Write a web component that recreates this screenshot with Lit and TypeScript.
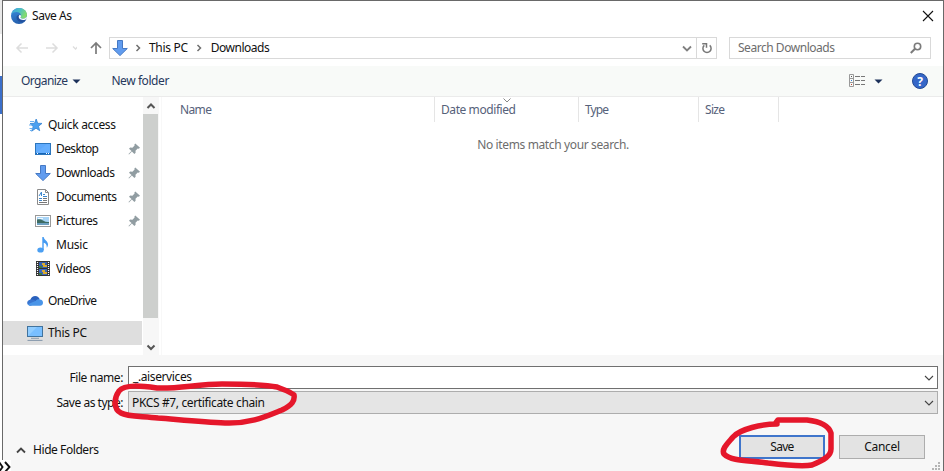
import { LitElement, html, css, svg } from "lit";
import { customElement, property } from "lit/decorators.js";

/** A text label whose tracking is adjusted so that it fills a given width. */
@customElement("ui-label")
class UiLabel extends LitElement {
  @property() text = "";
  @property({ type: Number }) size = 0;

  static styles = css`
    :host { display: block; flex: none; white-space: pre; }
    .run { display: inline-block; }
  `;

  firstUpdated() {
    const run = this.renderRoot.querySelector(".run") as HTMLElement;
    const natural = run.getBoundingClientRect().width;
    if (this.size && this.text.length > 1) {
      run.style.letterSpacing = (this.size - natural) / (this.text.length - 1) + "px";
    }
  }

  render() {
    return html`<span class="run">${this.text}</span>`;
  }
}

const label = (text: string, size: number) => html`<ui-label text=${text} size=${size}></ui-label>`;

const down = svg`<path d="M5.5 .5h5v8h4.8L8 15.6 .7 8.500h4.800z" fill="#619cef" stroke="#4579c4"/>`;

const icons: Record<string, unknown> = {
  star: svg`<path d="M9.200 2l1.500 4.300 4.300.1-3.500 2.800 1.200 4.500-3.700-2.500-4.300 3 1.500-4.700L3 6.500l4.500-.2z" fill="#4ba0f0" stroke="#3584d3" stroke-width=".8"/><path d="M3 4.500h4M2 8h3M2.500 11.500h3M3 13.500h2" stroke="#6eb1f0"/>`,
  desktop: svg`<rect x=".5" y="2.500" width="15" height="11" fill="#5faafc" stroke="#2c76bd"/><path d="M1 11.500L12 3h3v9H1z" fill="#6db4ff" opacity=".5"/><path d="M1 12.500h14" stroke="#1565b5"/><path d="M2 12.500h1M11 12.500h1M13 12.500h1" stroke="#fff"/>`,
  down,
  doc: svg`<path d="M2.500.5h8l3 3v12h-11z" fill="#fff" stroke="#8a8a8a"/><path d="M10.500.5v3h3" fill="none" stroke="#8a8a8a"/><path d="M4 7l2.500-4v4M8 5.500h2M8 7.500h4M4 9.500h3M4 11.500h3" stroke="#3c87ce" fill="none"/><path d="M8 9.500h4M8 11.500h4M4 13.500h8" stroke="#777"/>`,
  pic: svg`<rect x=".5" y="2.500" width="15" height="11" fill="#fff" stroke="#999"/><rect x="2" y="4" width="12" height="8" fill="#a8d4f6"/><path d="M2 6.500q3-1 6 1t6 1.500v1H2z" fill="#3d6b63"/><path d="M2 10h12v2H2z" fill="#6c9fc0"/><path d="M3 5.500h5" stroke="#eef8ff"/>`,
  music: svg`<ellipse cx="5.500" cy="13" rx="3.200" ry="2.600" fill="#4b9ff2"/><path d="M7.300 0h1.400c.3 3 4.300 4 4.300 7.300 0 1.400-.4 2.400-1.200 3.400.2-3-1.200-4.500-3.100-5V13H7.300z" fill="#459bf2"/>`,
  video: svg`<rect x="1" y="0" width="14" height="15" fill="#333"/><rect x="4" y="1" width="8" height="6" fill="#355fae"/><rect x="4" y="8" width="8" height="6" fill="#3b68bd"/><path d="M7 2h3v2h2v2H8V4H7zM7 9h3v2h2v2H8v-2H7z" fill="#d9aa30"/><path d="M4 5h3v2H4zM4 12h3v2H4z" fill="#3b7b42"/><path d="M2.500 1v14M13.500 1v14" stroke="#fff" stroke-width="1.200" stroke-dasharray="1 1"/>`,
  cloud: svg`<path d="M3.300 7C4 4.300 6 3 8.200 3c2.300 0 3.900 1.400 4.500 3.300L9 10H3z" fill="#2a61bd"/><path d="M3.800 6.500c2-.5 4 .6 5.700 2L4 12.800C-.8 13-1.300 7 3.800 6.500z" fill="#3975d0"/><path d="M8.500 8c1-1.500 2.700-2 4.200-1.500C15 6.700 16 8 16 9.800c0 2-1.300 3-3 3H3.600c-1.300 0-2.300-.6-2.900-1.500z" fill="#4a95e8"/>`,
  pc: svg`<rect x=".5" y="1.500" width="15" height="10" fill="#79bfff" stroke="#41739d"/><path d="M1 11V2h9z" fill="#91cdff"/><path d="M4 13.300h8" stroke="#8b9cac"/><path d="M.5 15.400h15" stroke="#8396ab"/>`,
  pin: svg`<path d="M9.300 2.500l4.700 4.200-1.300 1-1-.1L9.500 9.800l.1 2-1.200 1.100-2.500-2.400L3 13.500 2.500 13l3-3L3 7.700l1.200-1.100 2.200.1L8.600 4.500l-.2-1z" fill="#919da2"/>`,
  edge: svg`
    <defs>
      <linearGradient id="t" x1="0" y1="0" x2="1" y2=".4"><stop offset="0" stop-color="#3d9fe0"/><stop offset=".55" stop-color="#4cc0c4"/><stop offset="1" stop-color="#86dc6c"/></linearGradient>
      <linearGradient id="b" x1="0" y1="0" x2=".3" y2="1"><stop offset="0" stop-color="#3c8fe0"/><stop offset="1" stop-color="#2560ae"/></linearGradient>
    </defs>
    <circle cx="8" cy="8" r="8" fill="url(#b)"/>
    <path d="M.4 6C1.400 2.500 4.400 0 8 0c4.600 0 8 3.300 8 6.800 0 2.500-1.800 4-4.200 4-1.400 0-2.300-.6-2.300-1.200 0-.5.6-.8.6-1.900C10.100 5.700 8 4 5.400 4 3.500 4 1.500 4.800.4 6z" fill="url(#t)"/>
    <path d="M6 7.700c-1.500 3 1.200 6.500 5 6.200 1.800-.1 3.200-.9 4.200-2.300-1.600.8-4.300 1-5.900-.2C7.900 10.500 7.600 9 8.300 7.500 7.500 7 6.500 7 6 7.700z" fill="#24509c"/>
    <path d="M8.300 7.200c-1.200 1-.6 3.500 1.500 4.300 2 .8 4.400.5 6-.8l-.4 1.300L16 8.300c-1.200 1.800-2.700 2.600-4.200 2.500-1.400 0-2.300-.6-2.300-1.200 0-.5.6-.8.600-1.500-.2-.9-1-1.300-1.800-.9z" fill="#fff"/>`,
};

const icon = (name: string) => html`<svg class="ico" viewBox="0 0 16 16" width="16" height="16">${icons[name]}</svg>`;

const chevron = (d: string, color: string, w = 1.2) =>
  html`<svg class="ico" width="12" height="12" viewBox="0 0 12 12"><path d=${d} fill="none" stroke=${color} stroke-width=${w} /></svg>`;

const DOWN = "M2 4l4 4 4-4";
const RIGHT = "M4.500 3l3 3-3 3";

interface Place { name: string; width: number; icon: string; level?: number; pinned?: boolean; gap?: boolean; selected?: boolean }

const places: Place[] = [
  { name: "Quick access", width: 68, icon: "star" },
  { name: "Desktop", width: 43, icon: "desktop", level: 1, pinned: true },
  { name: "Downloads", width: 59, icon: "down", level: 1, pinned: true },
  { name: "Documents", width: 61, icon: "doc", level: 1, pinned: true },
  { name: "Pictures", width: 42, icon: "pic", level: 1, pinned: true },
  { name: "Music", width: 32, icon: "music", level: 1 },
  { name: "Videos", width: 35, icon: "video", level: 1 },
  { name: "OneDrive", width: 49, icon: "cloud", gap: true },
  { name: "This PC", width: 39, icon: "pc", gap: true, selected: true },
];

@customElement("app-root")
class AppRoot extends LitElement {
  static styles = css`
    :host {
      display: grid; grid-template-columns: 2px 942px; position: relative;
      width: 944px; height: 471px; overflow: hidden; box-sizing: border-box;
      font: 12px/16px "Noto Sans", "Open Sans", sans-serif; color: #111; background: #fff;
    }
    * { box-sizing: border-box; }
    svg { display: block; flex: none; }
    .behind { display: grid; grid-template-rows: 34px 42px 38px 1fr; }
    .behind .tab { background: #e9e9e9; }
    .behind .blue { background: #3b6fca; }
    .window {
      border: 1px solid #696969; border-bottom: 0; height: 471px;
      display: grid; grid-template-columns: 940px; grid-template-rows: 29px 36px 31px 258px 116px;
    }
    .title { display: flex; align-items: center; padding: 0 8px; gap: 5px; }
    .grow { flex: 1; }
    .title .close { margin-right: 1px; }
    .nav { display: flex; align-items: center; padding: 0 12px; }
    .nav > svg { margin-right: 10px; }
    .nav > .up { margin-right: 4px; }
    .address { display: flex; align-items: center; width: 608px; height: 22px; border: 1px solid #d9d9d9; }
    .crumbs { display: flex; align-items: center; padding-left: 2px; flex: 1; }
    .crumbs svg:nth-of-type(2) { margin: 0 5px 0 4px; }
    .crumbs ui-label + svg { margin: 0 6px 0 5px; }
    .reload { width: 20px; height: 20px; border-left: 1px solid #d9d9d9; display: grid; place-items: center; margin-left: 3px; }
    .search { display: flex; align-items: center; justify-content: space-between; width: 202px; height: 22px; border: 1px solid #d9d9d9; margin-left: 12px; padding: 0 7px 0 8px; color: #6d6d6d; }
    .tools { background: #f8faf8; border-bottom: 1px solid #ebebeb; display: flex; align-items: center; padding: 0 15px 0 18px; color: #27385c; }
    .tools .caret { margin: 0 30px 0 5px; }
    .tools .views { margin-right: 8px; }
    .tools .caret2 { margin-right: 29px; }
    .main { display: grid; grid-template-columns: 139px 17px 2px 1fr; }
    .places { padding-top: 16px; }
    .place { display: flex; align-items: center; height: 24px; padding-left: 24px; gap: 5px; }
    .place.child { padding-left: 32px; }
    .place.gap { margin-top: 8px; }
    .place.selected { background: #dedede; }
    .place .pin { margin-left: auto; }
    .scroll { background: #f7f7f7; display: grid; grid-template-rows: 17px 204px 37px; justify-items: center; margin-left: 1px; }
    .scroll .thumb { background: #cdcfcd; width: 15px; justify-self: start; }
    .scroll svg { margin-top: 3px; }
    .scroll .thumb + svg { margin-top: 23px; }
    .list { border-left: 1px solid #f8f8f8; }
    .heads { display: grid; grid-template-columns: 273px 144px 120px 80px; height: 25px; color: #56617a; }
    .head { border-right: 1px solid #e5e5e5; padding: 5px 0 0 6px; position: relative; }
    .head:first-child { padding-left: 18px; }
    .sort { position: absolute; left: 66px; top: -3px; }
    .empty { display: flex; justify-content: center; padding: 15px 0 0 1px; color: #6d6d6d; }
    .foot { background: #f7f7f7; display: grid; grid-template-rows: 25px 23px 1fr; padding: 11px 5px 0 0; }
    .field { display: grid; grid-template-columns: 120px 810px; column-gap: 5px; }
    .field > ui-label { justify-self: end; padding-top: 4px; }
    .box { height: 23px; border: 1px solid #707070; background: #fff; display: flex; align-items: center; justify-content: space-between; padding: 0 2px 0 4px; }
    .box .value { padding-bottom: 2px; }
    .box.type { background: #e5e5e5; border-color: #adadad; padding-left: 3px; }
    .box.type .value { padding-bottom: 0; }
    .actions { display: flex; align-items: flex-start; padding: 21px 13px 0 12px; }
    .hide { display: flex; align-items: center; gap: 6px; padding-top: 7px; }
    .btn { width: 86px; height: 24px; background: #e3e3e3; border: 1px solid #adadad; display: grid; place-items: center; margin-left: 14px; }
    .btn.main-btn { border: 2px solid #3f75cb; }
    .marks { position: absolute; inset: 0; pointer-events: none; }
    .more { position: absolute; left: 0; top: 460px; width: 11px; height: 11px; background: #fff; overflow: hidden; display: flex; }
  `;

  render() {
    return html`
      <div class="behind"><div class="tab"></div><div></div><div class="blue"></div></div>
      <div class="window">
        <div class="title">
          ${icon("edge")}${label("Save As", 40)}<span class="grow"></span>
          <svg class="close" width="12" height="12" viewBox="0 0 12 12"><path d="M1 1l10 10M11 1L1 11" stroke="#111" stroke-width="1.100" /></svg>
        </div>
        <div class="nav">
          <svg width="14" height="14" viewBox="0 0 14 14"><path d="M13 7H2M6.500 2.500L2 7l4.500 4.500" fill="none" stroke="#ddd" stroke-width="1.500" /></svg>
          <svg width="38" height="14" viewBox="0 0 38 14"><path d="M7 7h11M13.500 2.500L18 7l-4.500 4.500" fill="none" stroke="#ddd" stroke-width="1.500" /><path d="M34 5.500l2.500 2.500 2.500-2.500" fill="none" stroke="#ddd" stroke-width="1.300" /></svg>
          <svg class="up" width="18" height="14" viewBox="0 0 18 14"><path d="M9 13V2M4 7l5-5 5 5" fill="none" stroke="#7b7b7b" stroke-width="1.700" /></svg>
          <div class="address">
            <div class="crumbs">
              ${icon("down")}${chevron(RIGHT, "#6f6f6f", 1.500)}${label("This PC", 39)}${chevron(RIGHT, "#6f6f6f", 1.500)}${label("Downloads", 59)}
            </div>
            ${chevron("M2 4.500l4 4 4-4", "#808080", 1.800)}
            <div class="reload"><svg width="12" height="12" viewBox="0 0 12 12"><path d="M8.700 3.400A4.100 4.100 0 1 1 3.300 3.400M1.200 1.700h4.300v4" fill="none" stroke="#777" stroke-width="1.500" /></svg></div>
          </div>
          <div class="search">${label("Search Downloads", 97)}
            <svg width="14" height="12" viewBox="0 0 14 12"><circle cx="8.500" cy="4.500" r="3.200" fill="none" stroke="#7b7b7b" stroke-width="1.600" /><path d="M6 6.800L1.800 11" stroke="#7b7b7b" stroke-width="2" /></svg>
          </div>
        </div>
        <div class="tools">
          ${label("Organize", 47)}<svg class="caret" width="9" height="5" viewBox="0 0 9 5"><path d="M.5.5h8l-4 4z" fill="#1c315a" /></svg>
          ${label("New folder", 58)}<span class="grow"></span>
          <svg class="views" width="17" height="14" viewBox="0 0 17 14">
            <path d="M.5.5h4v12h-4zM.5 4.500h4M.5 8.500h4" fill="none" stroke="#999" />
            <path d="M6 2.500h5m1 0h4M6 6.500h5m1 0h4M6 10.500h5m1 0h4" stroke="#777" />
            <path d="M2 2.500h1" stroke="#555" /><path d="M2 6.500h1" stroke="#3884df" /><path d="M2 10.500h1" stroke="#c3442d" />
          </svg>
          <svg class="caret2" width="9" height="5" viewBox="0 0 9 5"><path d="M.5.5h8l-4 4z" fill="#1c315a" /></svg>
          <svg width="16" height="16" viewBox="0 0 16 16"><circle cx="8" cy="8" r="7.500" fill="#3567c8" stroke="#234a94" /><text x="8" y="12.500" text-anchor="middle" font-size="12" font-weight="700" fill="#fff">?</text></svg>
        </div>
        <div class="main">
          <div class="places">
            ${places.map((p) => html`
              <div class="place ${p.level ? "child" : ""} ${p.gap ? "gap" : ""} ${p.selected ? "selected" : ""}">
                ${icon(p.icon)}${label(p.name, p.width)}
                ${p.pinned ? html`<svg class="pin" width="16" height="16" viewBox="0 0 16 16">${icons.pin}</svg>` : ""}
              </div>`)}
          </div>
          <div class="scroll">
            ${chevron("M2.500 8L6 4.500 9.500 8", "#555", 2)}<div class="thumb"></div>${chevron("M2.500 4.500L6 8l3.500-3.500", "#555", 2)}
          </div>
          <div></div>
          <div class="list">
            <div class="heads">
              <div class="head">${label("Name", 32)}</div>
              <div class="head">${label("Date modified", 75)}<span class="sort">${chevron("M2.500 4.500l3.500 3.500 3.500-3.500", "#888", 1)}</span></div>
              <div class="head">${label("Type", 24)}</div>
              <div class="head">${label("Size", 20)}</div>
            </div>
            <div class="empty">${label("No items match your search.", 152)}</div>
          </div>
        </div>
        <div class="foot">
          <div class="field">${label("File name:", 54)}<div class="box"><div class="value">${label("_.aiservices", 59)}</div>${chevron(DOWN, "#444", 1.100)}</div></div>
          <div class="field">${label("Save as type:", 67)}<div class="box type"><div class="value">${label("PKCS #7, certificate chain", 133)}</div>${chevron(DOWN, "#444", 1.100)}</div></div>
          <div class="actions">
            <div class="hide">${chevron("M2 8.500L6 4.500l4 4", "#444", 1.800)}${label("Hide Folders", 66)}</div>
            <span class="grow"></span>
            <div class="btn main-btn">${label("Save", 24)}</div>
            <div class="btn">${label("Cancel", 36)}</div>
          </div>
        </div>
      </div>
      <svg class="marks" width="944" height="471" viewBox="0 0 944 471">
        <g fill="none" stroke="#e5172b" stroke-width="5.500" stroke-linecap="round" stroke-linejoin="round">
          <path d="M157 388C142 386 125 384 119 391C114 398 113 409 121 413C128 417 143 416 158 418C183 420 204 422 225 423C251 424 267 416 282 410C292 405 295 401 294 395C289 391 284 390 277 387C263 384 244 384 222 384C198 384 178 389 157 388" />
          <path d="M777 424C762 424 740 429 733 437C728 443 721 449 724 454C732 462 751 460 768 463C784 465 803 467 812 465C824 460 831 456 831 449L831 433C828 424 816 421 807 420L778 420L775 424" />
        </g>
        <g fill="#b5b5b5"><path d="M938 462h2v2h-2zM938 465h2v2h-2zM938 468h2v2h-2zM935 465h2v2h-2zM935 468h2v2h-2zM932 468h2v2h-2z" /></g>
      </svg>
      <div class="more"><svg width="11" height="11" viewBox="0 0 11 11"><path d="M-1 2l3.500 5L-1 12M5 2l4.500 5L5 12" fill="none" stroke="#111" stroke-width="1.900" /></svg></div>
    `;
  }
}
